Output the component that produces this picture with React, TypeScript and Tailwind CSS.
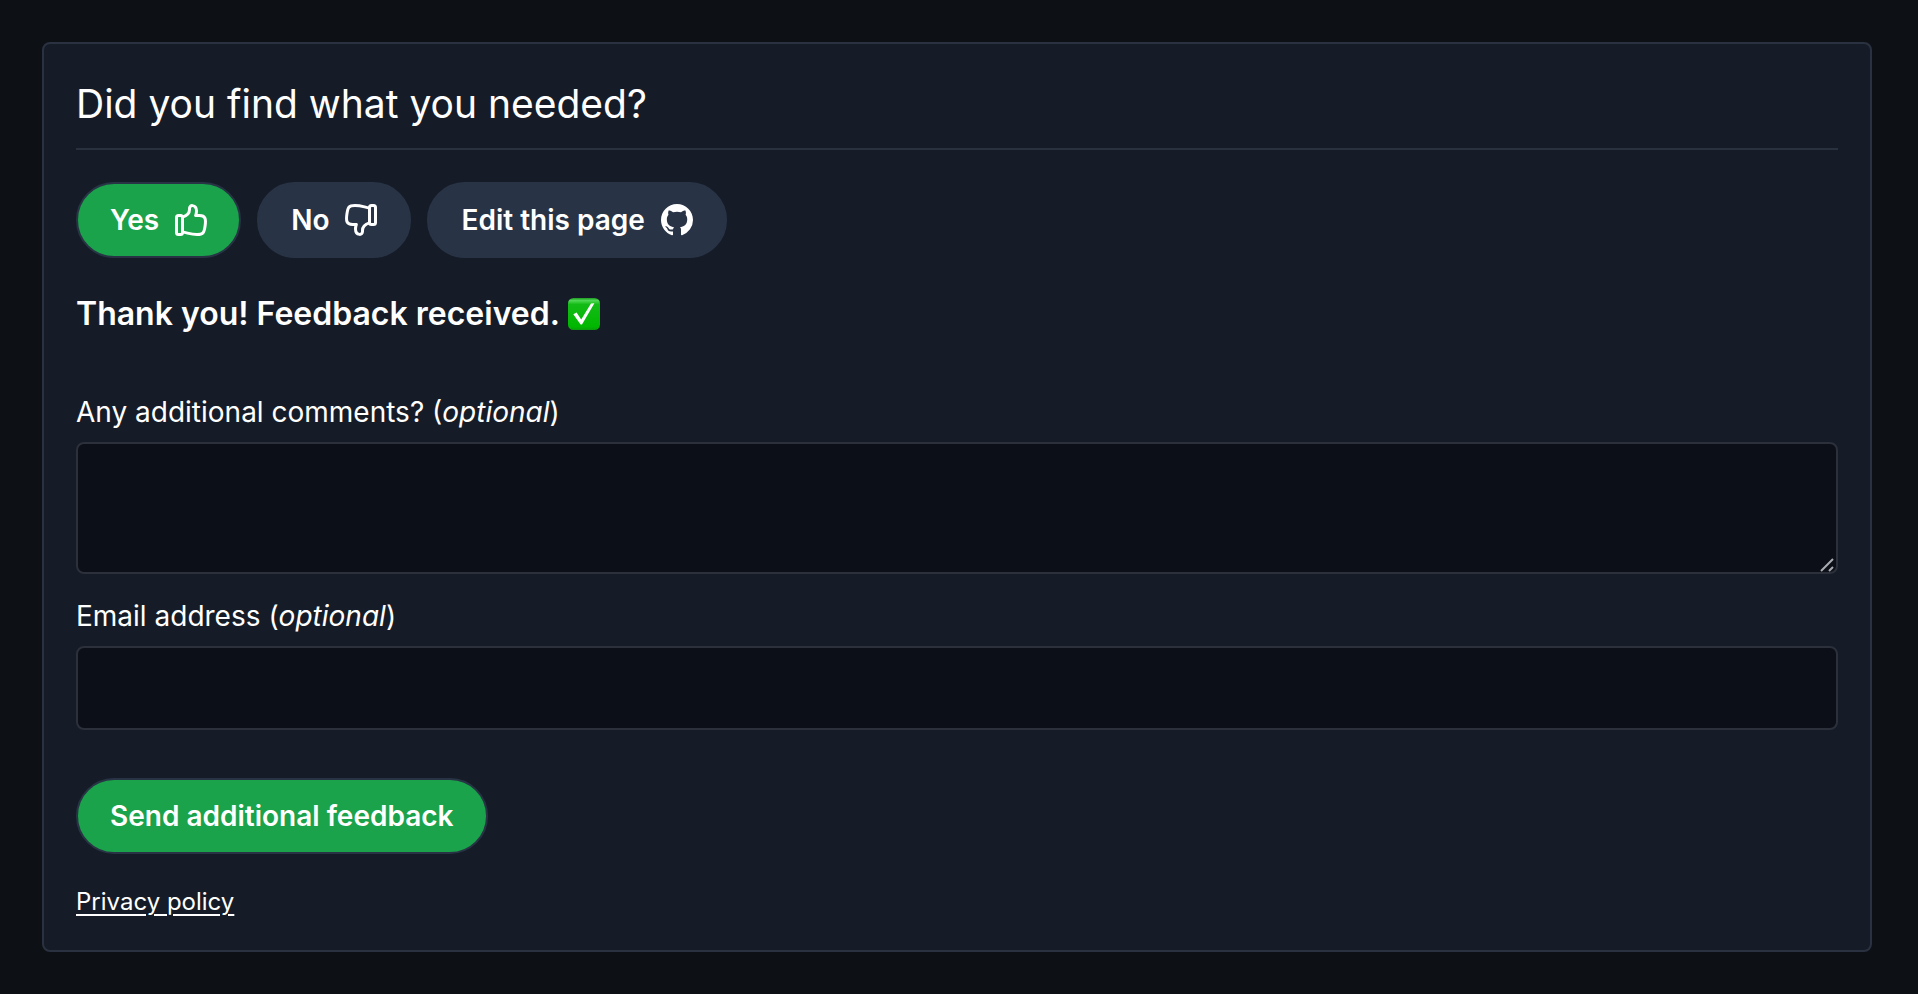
import type { ReactNode } from "react";

const pill =
  "flex h-[76px] items-center gap-4 rounded-full border-2 border-[#283446] px-8 text-[28px] leading-9 font-semibold";
const field =
  "block w-full rounded-lg border-2 border-[#2b303b] bg-[#0c0f17] px-4 py-3 text-[28px] leading-9 text-white outline-none focus:border-[#3b82f6]";

function ThumbIcon({ className = "" }: { className?: string }) {
  return (
    <svg
      viewBox="0 0 16 16"
      fill="none"
      stroke="currentColor"
      strokeWidth="1.5"
      strokeLinejoin="round"
      aria-hidden="true"
      className={`size-8 ${className}`}
    >
      <rect x="0.75" y="5.75" width="3" height="9.5" rx="1" />
      <path d="M3.75 6.55C5.5 6 7.25 4.9 7.25 2.75v-.5C7.25 1.35 7.9.7 8.75.81c1.4.17 2 1.2 2 2.69 0 .9-.15 1.5-.4 2.25h1.9c3 0 3.3 1.7 2.8 5.2-.5 3.4-.8 4.3-4.05 4.3-3.2 0-4.9-.9-7.25-1.2" />
    </svg>
  );
}

function GithubIcon() {
  return (
    <svg viewBox="0 0 16 16" fill="currentColor" aria-hidden="true" className="size-8">
      <path d="M8 0C3.58 0 0 3.58 0 8c0 3.54 2.29 6.53 5.47 7.59.4.07.55-.17.55-.38 0-.19-.01-.82-.01-1.49-2.01.37-2.53-.49-2.69-.94-.09-.23-.48-.94-.82-1.13-.28-.15-.68-.52-.01-.53.63-.01 1.08.58 1.23.82.72 1.21 1.87.87 2.33.66.07-.52.28-.87.51-1.07-1.78-.2-3.64-.89-3.64-3.95 0-.87.31-1.59.82-2.15-.08-.2-.36-1.02.08-2.12 0 0 .67-.21 2.2.82.64-.18 1.32-.27 2-.27s1.36.09 2 .27c1.53-1.04 2.2-.82 2.2-.82.44 1.1.16 1.92.08 2.12.51.56.82 1.27.82 2.15 0 3.07-1.87 3.75-3.65 3.95.29.25.54.73.54 1.48 0 1.07-.01 1.93-.01 2.2 0 .21.15.46.55.38A8.01 8.01 0 0 0 16 8c0-4.42-3.58-8-8-8z" />
    </svg>
  );
}

function CheckMark() {
  return (
    <svg viewBox="0 0 32 32" aria-hidden="true" className="size-8">
      <defs>
        <linearGradient id="check-fill" x1="0" y1="0" x2="0" y2="1">
          <stop offset="0" stopColor="#1f9c24" />
          <stop offset="0.08" stopColor="#4fd853" />
          <stop offset="0.2" stopColor="#14bb16" />
          <stop offset="0.9" stopColor="#00b700" />
          <stop offset="1" stopColor="#0a9a0c" />
        </linearGradient>
      </defs>
      <rect width="32" height="32" rx="5.5" fill="url(#check-fill)" />
      <path d="M5.3 16.2 8.6 14.4 13.2 21.4 23 5.6 26.4 5.2 14 26.4H12.6Z" fill="#fff" />
    </svg>
  );
}

function Field({ id, label, children }: { id: string; label: string; children: ReactNode }) {
  return (
    <div>
      <label htmlFor={id} className="mb-3 block text-[28px] leading-9">
        {label} (<em>optional</em>)
      </label>
      {children}
    </div>
  );
}

export default function App() {
  return (
    <main className="min-h-screen bg-[#0d1014] py-[42px] pr-[46px] pl-[42px] font-[Inter,sans-serif] text-white">
      <section className="rounded-lg border-2 border-[#2a3241] bg-[#161c27] p-8">
        <h2 className="mb-8 border-b-2 border-[#29313f] pb-4 text-[39px] leading-14">
          Did you find what you needed?
        </h2>
        <div className="mb-8 flex flex-wrap gap-4">
          <button type="button" aria-pressed="true" className={`${pill} bg-[#1aa34a]`}>
            Yes
            <ThumbIcon />
          </button>
          <button type="button" aria-pressed="false" className={`${pill} bg-[#283446]`}>
            No
            <ThumbIcon className="rotate-180" />
          </button>
          <a href="#edit" className={`${pill} bg-[#283446]`}>
            Edit this page
            <GithubIcon />
          </a>
        </div>
        <p className="mb-14 flex items-center gap-2 text-[32px] leading-12 font-semibold">
          Thank you! Feedback received.
          <CheckMark />
        </p>
        <form className="flex flex-col gap-6" onSubmit={(event) => event.preventDefault()}>
          <Field id="comments" label="Any additional comments?">
            <div className="relative">
              <textarea
                id="comments"
                className={`${field} h-[132px] resize-y [&::-webkit-resizer]:hidden`}
              />
              <svg
                viewBox="0 0 14 14"
                fill="none"
                stroke="#a9abb0"
                strokeWidth="2"
                aria-hidden="true"
                className="pointer-events-none absolute right-1 bottom-0.5 size-3.5"
              >
                <path d="M1 13 13 1M9 13 13 9" />
              </svg>
            </div>
          </Field>
          <Field id="email" label="Email address">
            <input id="email" type="email" className={`${field} h-[84px]`} />
          </Field>
          <button type="submit" className={`${pill} mt-6 self-start bg-[#1aa34a]`}>
            Send additional feedback
          </button>
        </form>
        <a
          href="#privacy"
          className="mt-8 block w-fit text-2xl leading-8 underline decoration-2 underline-offset-4"
        >
          Privacy policy
        </a>
      </section>
    </main>
  );
}
